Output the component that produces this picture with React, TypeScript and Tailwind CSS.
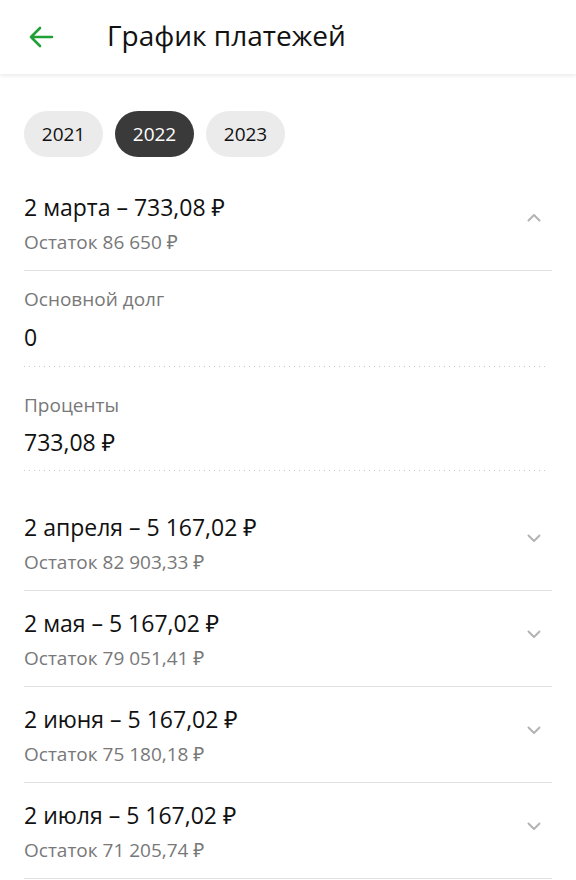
import React, { useState } from 'react';

// Строки графика платежей
const payments = [
    { date: '2 апреля', amount: '5 167,02 ₽', rest: '82 903,33 ₽' },
    { date: '2 мая', amount: '5 167,02 ₽', rest: '79 051,41 ₽' },
    { date: '2 июня', amount: '5 167,02 ₽', rest: '75 180,18 ₽' },
    { date: '2 июля', amount: '5 167,02 ₽', rest: '71 205,74 ₽' },
];

const years = ['2021', '2022', '2023'];

const Chevron = ({ up = false }: { up?: boolean }) => (
    <svg width="18" height="18" viewBox="0 0 18 18" fill="none" className="shrink-0 -mt-[10px]">
        <path
            d={up ? 'M3.5 11.5 L9 6 L14.5 11.5' : 'M3.5 6.5 L9 12 L14.5 6.5'}
            stroke="#b3b3b3"
            strokeWidth="2"
            strokeLinecap="round"
            strokeLinejoin="round"
        />
    </svg>
);

const RowHeader = ({ title, rest, up }: { title: string; rest: string; up?: boolean }) => (
    <div className="flex items-center justify-between pt-[17px] pb-[16px] pr-[9px]">
        <div className="flex flex-col">
            <span className="text-[23px] leading-[30px] text-[#111]">{title}</span>
            <span className="mt-[8px] text-[19px] leading-[24px] text-[#787878]">Остаток {rest}</span>
        </div>
        <Chevron up={up} />
    </div>
);

// Пунктирный разделитель с редкими точками
const Dots = () => (
    <div className="h-px mr-[4px] bg-[linear-gradient(to_right,#c8c8c8_1px,transparent_1px)] bg-[length:5px_1px]" />
);

export default function App() {
    const [year, setYear] = useState('2022');

    return (
        <div className="w-[576px] h-[880px] overflow-hidden bg-white" style={{ fontFamily: '"Open Sans", "Noto Sans", sans-serif' }}>
            {/* Шапка */}
            <header className="h-[74px] flex items-center bg-white shadow-[0_2px_4px_rgba(0,0,0,0.08)] relative z-10">
                <button className="ml-[27px] w-[28px] h-[28px] flex items-center justify-center">
                    <svg width="28" height="28" viewBox="0 0 28 28" fill="none">
                        <path d="M25 14 H4 M13 5 L4 14 L13 23" stroke="#21a038" strokeWidth="2.6" strokeLinecap="round" strokeLinejoin="round" />
                    </svg>
                </button>
                <h1 className="ml-[52px] -mt-[5px] text-[28px] text-[#111] font-normal">График платежей</h1>
            </header>

            <div className="px-[24px]">
                {/* Выбор года */}
                <div className="flex gap-[12px] pt-[37px] pb-[18px]">
                    {years.map((y) => (
                        <button
                            key={y}
                            onClick={() => setYear(y)}
                            className={`w-[79px] h-[46px] rounded-full text-[19px] ${
                                y === year ? 'bg-[#3a3a3a] text-white' : 'bg-[#ebebeb] text-[#111]'
                            }`}
                        >
                            {y}
                        </button>
                    ))}
                </div>

                {/* Развёрнутый платёж */}
                <div className="border-b border-[#e2e2e2]">
                    <RowHeader title="2 марта – 733,08 ₽" rest="86 650 ₽" up />
                </div>
                <div className="pb-[24px]">
                    <div className="pt-[16px] pb-[14px]">
                        <div className="text-[19px] leading-[24px] text-[#787878]">Основной долг</div>
                        <div className="mt-[11px] text-[23px] leading-[30px] text-[#111]">0</div>
                    </div>
                    <Dots />
                    <div className="pt-[26px] pb-[13px]">
                        <div className="text-[19px] leading-[24px] text-[#787878]">Проценты</div>
                        <div className="mt-[10px] text-[23px] leading-[30px] text-[#111]">733,08 ₽</div>
                    </div>
                    <Dots />
                </div>

                {payments.map((p) => (
                    <div key={p.date} className="border-b border-[#e2e2e2]">
                        <RowHeader title={`${p.date} – ${p.amount}`} rest={p.rest} />
                    </div>
                ))}
            </div>
        </div>
    );
}
